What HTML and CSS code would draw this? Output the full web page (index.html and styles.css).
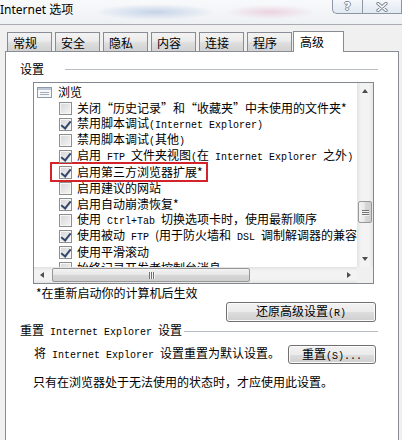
FILE: index.html
```html
<!DOCTYPE html>
<html lang="zh-CN">
<head>
  <meta charset="UTF-8">
  <title>Internet 选项</title>
  <link rel="stylesheet" href="styles.css">
</head>
<body>

  <div class="titlebar">
    <span class="title">Internet 选项</span>
    <div class="caption">
      <span class="cap-btn help">?</span>
      <span class="cap-btn close">
        <svg width="12" height="10" viewBox="0 0 12 10">
          <path d="M2 1.5 L10 8.5 M10 1.5 L2 8.5" stroke="#7d8794" stroke-width="3.4" stroke-linecap="round"/>
          <path d="M2 1.5 L10 8.5 M10 1.5 L2 8.5" stroke="#fff" stroke-width="1.6" stroke-linecap="round"/>
        </svg>
      </span>
    </div>
  </div>

  <div class="tabs">
    <div class="tab">常规</div>
    <div class="tab">安全</div>
    <div class="tab">隐私</div>
    <div class="tab">内容</div>
    <div class="tab">连接</div>
    <div class="tab">程序</div>
    <div class="tab active">高级</div>
  </div>

  <div class="panel">
    <div class="group-title first"><span>设置</span><span class="rule"></span></div>

    <div class="listbox">
      <div class="list-content">
        <div class="row root">
          <svg class="node-icon" width="15" height="11" viewBox="0 0 15 11">
            <rect x="0.5" y="0.5" width="14" height="10" fill="#f6f8fa" stroke="#8e9aa8"/>
            <rect x="1" y="1" width="13" height="2" fill="#bcc8d6"/>
            <path d="M3 5.5h9M3 7.5h9" stroke="#a3aebb"/>
          </svg>
          <span class="lbl">浏览</span>
        </div>
        <div class="row"><span class="chk"></span><span class="lbl">关闭“历史记录”和“收藏夹”中未使用的文件夹*</span></div>
        <div class="row"><span class="chk on"></span><span class="lbl">禁用脚本调试<span class="en">(Internet Explorer)</span></span></div>
        <div class="row"><span class="chk"></span><span class="lbl">禁用脚本调试<span class="en">(</span>其他<span class="en">)</span></span></div>
        <div class="row"><span class="chk on"></span><span class="lbl">启用<span class="en"> FTP </span>文件夹视图<span class="en">(</span>在<span class="en"> Internet Explorer </span>之外<span class="en">)</span></span></div>
        <div class="row">
          <span class="marked"><span class="chk on"></span><span class="lbl">启用第三方浏览器扩展*</span></span>
        </div>
        <div class="row"><span class="chk"></span><span class="lbl">启用建议的网站</span></div>
        <div class="row"><span class="chk on"></span><span class="lbl">启用自动崩溃恢复*</span></div>
        <div class="row"><span class="chk"></span><span class="lbl">使用<span class="en"> Ctrl+Tab </span>切换选项卡时，使用最新顺序</span></div>
        <div class="row"><span class="chk on"></span><span class="lbl">使用被动<span class="en"> FTP </span>(用于防火墙和<span class="en"> DSL </span>调制解调器的兼容性)</span></div>
        <div class="row"><span class="chk on"></span><span class="lbl">使用平滑滚动</span></div>
        <div class="row"><span class="chk"></span><span class="lbl">始终记录开发者控制台消息</span></div>
      </div>

      <div class="vscroll">
        <span class="arrow up"></span>
        <span class="thumb"><i></i><i></i><i></i></span>
        <span class="arrow down"></span>
      </div>
      <div class="hscroll">
        <span class="arrow left"></span>
        <span class="thumb"><i></i><i></i><i></i></span>
        <span class="arrow right"></span>
      </div>
      <div class="corner"></div>
    </div>

    <div class="note">*在重新启动你的计算机后生效</div>

    <div class="btn-row">
      <button class="btn wide">还原高级设置<span class="en">(R)</span></button>
    </div>

    <div class="group-title"><span>重置<span class="en"> Internet Explorer </span>设置</span><span class="rule"></span></div>

    <div class="reset-row">
      <span>将<span class="en"> Internet Explorer </span>设置重置为默认设置。</span>
      <button class="btn small">重置<span class="en">(S)...</span></button>
    </div>

    <div class="hint">只有在浏览器处于无法使用的状态时，才应使用此设置。</div>
  </div>

</body>
</html>
```

FILE: styles.css
```css
* {
  box-sizing: border-box;
}

body {
  margin: 0;
  width: 402px;
  height: 440px;
  overflow: hidden;
  background-color: #f0f0f0;
  font-family: "Noto Sans CJK SC", sans-serif;
  font-size: 12px;
  color: #000;
}

.en {
  font-family: "Liberation Mono", monospace;
  font-size: 10px;
}

/* title bar */
.titlebar {
  height: 25px;
  display: flex;
  justify-content: space-between;
  border-bottom: 1px solid #a9adb3;
  background:
    radial-gradient(60px 8px at 155px 12px, rgba(140, 170, 215, 0.45), transparent),
    radial-gradient(45px 7px at 270px 12px, rgba(225, 160, 185, 0.4), transparent),
    linear-gradient(#f8f9fb, #eef1f4);
}

.title {
  font-family: "Noto Sans", "Noto Sans CJK SC", sans-serif;
  font-size: 12px;
  line-height: 20px;
}

.caption {
  display: flex;
  align-items: flex-start;
}

.cap-btn {
  height: 14px;
  display: flex;
  align-items: center;
  justify-content: center;
  border: 1px solid #8d96a3;
  border-top: none;
  background: linear-gradient(#f4f7fb, #e1e8f1);
}

.help {
  width: 30px;
  border-right: none;
  border-radius: 0 0 0 5px;
  font-family: "DejaVu Sans", sans-serif;
  font-weight: bold;
  font-size: 11px;
  color: #fff;
  text-shadow: 1px 0 #7d8794, -1px 0 #7d8794, 0 1px #7d8794, 0 -1px #7d8794;
}

.close {
  width: 40px;
}

/* tabs */
.tabs {
  display: flex;
  align-items: flex-end;
  height: 27px;
  padding-left: 7px;
  margin-bottom: -1px;
  position: relative;
  z-index: 1;
}

.tab {
  width: 45px;
  height: 19px;
  margin: 0 3px 1px 0;
  padding: 2px 0 0 5px;
  line-height: 16px;
  border: 1px solid #898c95;
  border-bottom: none;
  background: linear-gradient(#f3f3f3, #ebebeb 45%, #dedede 55%, #d2d2d2);
}

.tab.active {
  width: 51px;
  height: 21px;
  margin: 0 0 0 -2px;
  padding-left: 6px;
  background: #fff;
}

/* main panel */
.panel {
  margin-left: 5px;
  width: 394px;
  height: 390px;
  border: 1px solid #898c95;
  background: #fff;
  padding: 9px 20px 0 14px;
}

.group-title {
  display: flex;
  align-items: center;
  line-height: 16px;
  white-space: nowrap;
}

.group-title .rule {
  flex: 1;
  height: 1px;
  margin-left: 2px;
  background: #b9bec4;
}

.group-title.first .rule {
  margin-left: 21px;
}

/* list box with scrollbars */
.listbox {
  margin: 5px 0 0 13px;
  width: 341px;
  display: grid;
  grid-template-columns: 323px 16px;
  grid-template-rows: 184px 16px;
  border: 1px solid #828790;
}

.list-content {
  overflow: hidden;
  padding-top: 1px;
}

.row {
  display: flex;
  align-items: center;
  height: 16px;
  padding-left: 25px;
  white-space: nowrap;
}

.row.root {
  padding-left: 3px;
}

.node-icon {
  flex-shrink: 0;
  margin-right: 6px;
}

.lbl {
  flex-shrink: 0;
  line-height: 16px;
}

.chk {
  flex-shrink: 0;
  position: relative;
  width: 13px;
  height: 13px;
  margin-right: 5px;
  border: 1px solid #8e8f8f;
  background: linear-gradient(135deg, #d6d6d6, #f6f6f6);
  box-shadow: inset 0 0 0 1px #f6f6f6;
}

.chk.on::after {
  content: "";
  position: absolute;
  left: 3px;
  top: 0;
  width: 4px;
  height: 8px;
  border: solid #34466c;
  border-width: 0 2px 2px 0;
  transform: rotate(38deg);
}

.marked {
  display: flex;
  align-items: center;
  height: 16px;
  margin-left: -7px;
  padding: 0 3px 0 7px;
  outline: 2px solid #d3232b;
}

.vscroll,
.hscroll {
  display: flex;
  align-items: center;
  background: #ececec;
}

.vscroll {
  flex-direction: column;
  background: linear-gradient(to right, #e2e2e2, #f3f3f3 25%, #f3f3f3 75%, #e6e6e6);
}

.hscroll {
  background: linear-gradient(#e2e2e2, #f3f3f3 25%, #f3f3f3 75%, #e6e6e6);
}

.corner {
  background: #f0f0f0;
}

.arrow {
  flex-shrink: 0;
  width: 16px;
  height: 16px;
  display: flex;
  align-items: center;
  justify-content: center;
}

.arrow::before {
  content: "";
  border: 4px solid transparent;
}

.arrow.up::before {
  border-width: 0 3.5px 4px;
  border-bottom-color: #4e4e4e;
}

.arrow.down {
  margin-top: auto;
}

.arrow.down::before {
  border-width: 4px 3.5px 0;
  border-top-color: #4e4e4e;
}

.arrow.left::before {
  border-width: 3.5px 4px 3.5px 0;
  border-right-color: #4e4e4e;
}

.arrow.right {
  margin-left: auto;
}

.arrow.right::before {
  border-width: 3.5px 0 3.5px 4px;
  border-left-color: #4e4e4e;
}

.thumb {
  display: flex;
  align-items: center;
  justify-content: center;
  gap: 1px;
  border: 1px solid #979797;
  border-radius: 2px;
}

.vscroll .thumb {
  width: 14px;
  height: 22px;
  margin-top: 102px;
  flex-direction: column;
  background: linear-gradient(to right, #f3f3f3, #e6e6e6 50%, #d6d6d6 50%, #cfcfcf);
}

.vscroll .thumb i {
  width: 7px;
  height: 1px;
  background: #707070;
  box-shadow: 0 1px #f4f4f4;
}

.hscroll .thumb {
  width: 198px;
  height: 14px;
  margin-left: 2px;
  background: linear-gradient(#f3f3f3, #e6e6e6 50%, #d6d6d6 50%, #cfcfcf);
}

.hscroll .thumb i {
  width: 1px;
  height: 7px;
  background: #707070;
  box-shadow: 1px 0 #f4f4f4;
}

/* below the list */
.note {
  margin: 1px 0 0 16px;
  line-height: 16px;
}

.btn {
  font: inherit;
  color: #000;
  padding: 0;
  line-height: 16px;
  border: 1px solid #707070;
  border-radius: 3px;
  background: linear-gradient(#f2f2f2, #ebebeb 50%, #dddddd 50%, #cfcfcf);
  box-shadow: inset 0 0 0 1px #fbfbfb;
}

.btn-row {
  display: flex;
  justify-content: flex-end;
  margin-top: 1px;
  padding-right: 2px;
}

.btn.wide {
  width: 150px;
  height: 20px;
}

.btn.small {
  width: 88px;
  height: 19px;
}

.group-title + .reset-row {
  margin-top: 4px;
}

.reset-row {
  display: flex;
  justify-content: space-between;
  align-items: flex-start;
  padding: 0 2px 0 14px;
  line-height: 16px;
  white-space: nowrap;
}

.hint {
  margin: 10px 0 0 13px;
  line-height: 16px;
}
```
